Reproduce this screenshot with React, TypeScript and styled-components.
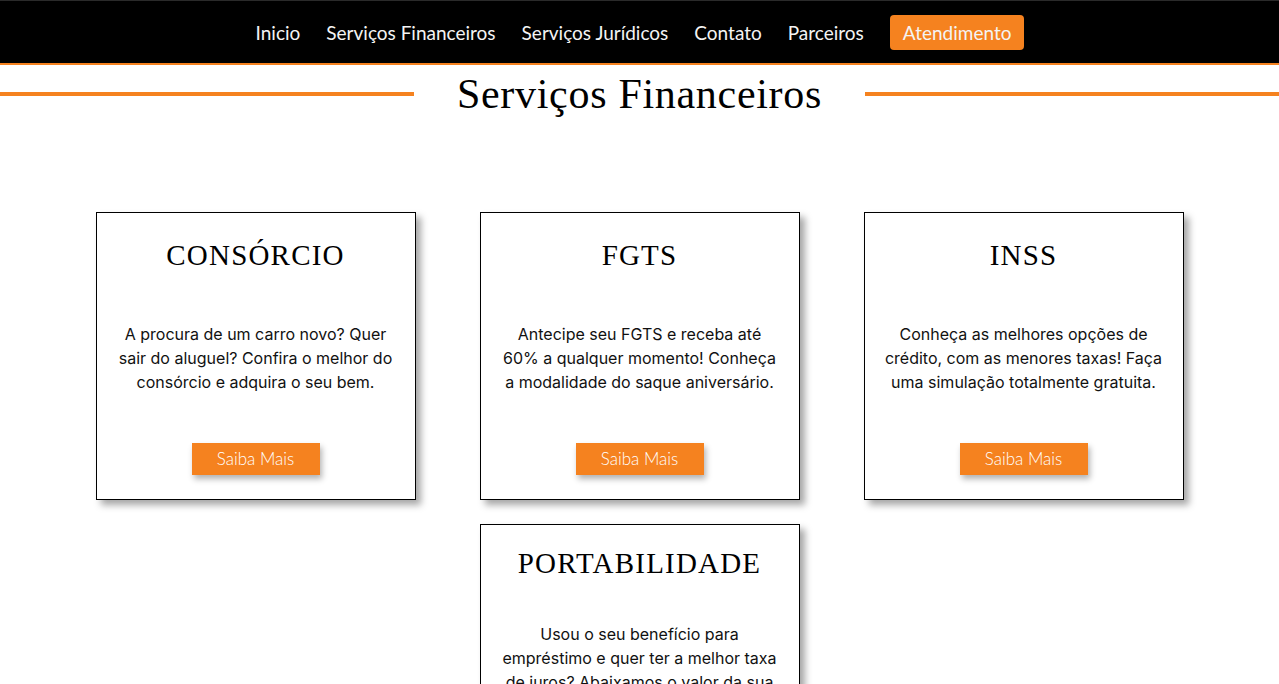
import React from 'react';
import styled, { createGlobalStyle } from 'styled-components';

const orange = '#f5821f';

const GlobalStyle = createGlobalStyle`
  body {
    margin: 0;
    background: #fff;
    font-family: 'Inter', 'Liberation Sans', sans-serif;
  }
`;

const Header = styled.header`
  height: 62px;
  background: #000;
  border-top: 1px solid #2a2a2a;
  border-bottom: 2px solid ${orange};
  display: flex;
  align-items: center;
  justify-content: center;
`;

const Nav = styled.nav`
  display: flex;
  align-items: center;
  gap: 26px;
  margin-left: 1px;
`;

const NavLink = styled.a<{ $cta?: boolean }>`
  font-family: 'Lato', 'Liberation Sans', sans-serif;
  font-size: 19px;
  color: #f4f4f4;
  text-decoration: none;
  cursor: pointer;
  padding: ${({ $cta }) => ($cta ? '6px 13px' : '0')};
  background: ${({ $cta }) => ($cta ? orange : 'transparent')};
  border-radius: ${({ $cta }) => ($cta ? '4px' : '0')};
  line-height: 23px;
`;

const TitleRow = styled.div`
  display: flex;
  align-items: center;
  height: 58px;
`;

const Line = styled.span`
  flex: 1;
  height: 4px;
  background: ${orange};
`;

const Title = styled.h1`
  margin: 0 43px;
  font-family: 'Liberation Serif', 'DejaVu Serif', serif;
  font-weight: 400;
  font-size: 42px;
  letter-spacing: 0.7px;
  color: #000;
`;

const Cards = styled.section`
  display: flex;
  flex-wrap: wrap;
  justify-content: center;
  gap: 24px 64px;
  padding-top: 89px;
  max-width: 1088px;
  margin: 0 auto;
`;

const Card = styled.article`
  box-sizing: border-box;
  width: 320px;
  height: 288px;
  border: 1px solid #000;
  background: #fff;
  box-shadow: 5px 5px 7px rgba(0, 0, 0, 0.35);
  display: flex;
  flex-direction: column;
  align-items: center;
  justify-content: space-around;
  padding: 0 18px;
  text-align: center;
`;

const CardTitle = styled.h2`
  margin: 0;
  font-family: 'Liberation Serif', 'DejaVu Serif', serif;
  font-weight: 400;
  font-size: 29px;
  line-height: 36px;
  letter-spacing: 1.2px;
  color: #000;
`;

const CardText = styled.p`
  margin: 0;
  font-size: 16px;
  line-height: 24px;
  color: #111;
`;

const MoreButton = styled.button`
  width: 128px;
  height: 32px;
  border: none;
  background: ${orange};
  color: #fff;
  font-family: 'Lato', 'Liberation Sans', sans-serif;
  font-weight: 300;
  font-size: 17px;
  box-shadow: 2px 4px 6px rgba(0, 0, 0, 0.3);
  cursor: pointer;
`;

const services = [
  {
    title: 'CONSÓRCIO',
    text: 'A procura de um carro novo? Quer sair do aluguel? Confira o melhor do consórcio e adquira o seu bem.',
  },
  {
    title: 'FGTS',
    text: 'Antecipe seu FGTS e receba até 60% a qualquer momento! Conheça a modalidade do saque aniversário.',
  },
  {
    title: 'INSS',
    text: 'Conheça as melhores opções de crédito, com as menores taxas! Faça uma simulação totalmente gratuita.',
  },
  {
    title: 'PORTABILIDADE',
    text: 'Usou o seu benefício para empréstimo e quer ter a melhor taxa de juros? Abaixamos o valor da sua parcela para você.',
  },
];

const App: React.FC = () => {
  return (
    <>
      <GlobalStyle />
      <Header>
        <Nav>
          <NavLink>Inicio</NavLink>
          <NavLink>Serviços Financeiros</NavLink>
          <NavLink>Serviços Jurídicos</NavLink>
          <NavLink>Contato</NavLink>
          <NavLink>Parceiros</NavLink>
          <NavLink $cta>Atendimento</NavLink>
        </Nav>
      </Header>
      <TitleRow>
        <Line />
        <Title>Serviços Financeiros</Title>
        <Line />
      </TitleRow>
      <Cards>
        {services.map((s) => (
          <Card key={s.title}>
            <CardTitle>{s.title}</CardTitle>
            <CardText>{s.text}</CardText>
            <MoreButton>Saiba Mais</MoreButton>
          </Card>
        ))}
      </Cards>
    </>
  );
};

export default App;
